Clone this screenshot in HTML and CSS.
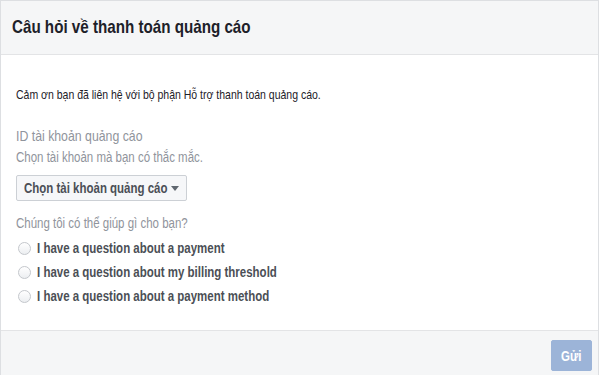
FILE: index.html
```html
<!DOCTYPE html>
<html lang="vi">
<head>
<meta charset="utf-8">
<title>Câu hỏi về thanh toán quảng cáo</title>
<link rel="stylesheet" href="styles.css">
</head>
<body>
<div class="dialog">
  <div class="header"><h1 class="title"><span class="c">Câu hỏi về thanh toán quảng cáo</span></h1></div>
  <div class="content">
    <p class="intro"><span class="c">Cảm ơn bạn đã liên hệ với bộ phận Hỗ trợ thanh toán quảng cáo.</span></p>
    <div class="label"><span class="c">ID tài khoản quảng cáo</span></div>
    <div class="hint"><span class="c">Chọn tài khoản mà bạn có thắc mắc.</span></div>
    <button class="select" type="button"><span class="c sel-text">Chọn tài khoản quảng cáo</span><span class="caret"></span></button>
    <div class="label q"><span class="c">Chúng tôi có thể giúp gì cho bạn?</span></div>
    <ul class="options">
      <li><span class="radio"></span><span class="c">I have a question about a payment</span></li>
      <li><span class="radio"></span><span class="c">I have a question about my billing threshold</span></li>
      <li><span class="radio"></span><span class="c">I have a question about a payment method</span></li>
    </ul>
  </div>
  <div class="footer"><button class="send" type="button"><span class="c">Gửi</span></button></div>
</div>
</body>
</html>
```
FILE: styles.css
```css
* { box-sizing: border-box; }
html, body { margin: 0; padding: 0; background: #fff; }
body { font-family: "Liberation Sans", Arial, sans-serif; color: #1d2129; }

/* condensed text run */
.c {
  display: inline-block; white-space: nowrap;
  transform: scaleX(0.82); transform-origin: 0 50%;
}

.dialog {
  width: 599px; height: 375px;
  border: 1px solid #dddfe2; border-bottom: none;
  display: flex; flex-direction: column;
}
.header {
  height: 54px; flex: none; background: #f5f6f7;
  border-bottom: 1px solid #e3e4e6;
  display: flex; align-items: center; padding: 0 0 1px 11px;
}
.title { margin: 0; font-size: 18.5px; font-weight: bold; color: #1d2129; }

.content { flex: 1; padding: 32px 0 0 15px; }
.intro { margin: 0 0 24px; font-size: 12.8px; line-height: 16px; color: #1d2129; }
.label { font-size: 15px; color: #90949c; line-height: 18px; }
.hint { font-size: 14px; color: #90949c; line-height: 16px; margin-top: 4px; }

.select {
  margin-top: 10px; width: 171px; height: 26px; padding: 0 0 0 7px;
  border: 1px solid #ccd0d5; border-radius: 2px; background: #f6f7f9;
  font-family: inherit; font-size: 14px; font-weight: bold; color: #4b4f56;
  display: flex; align-items: center; gap: 4px;
}
.sel-text { margin-right: -32px; }
.caret {
  width: 0; height: 0; margin-top: 1px;
  border-left: 4px solid transparent; border-right: 4px solid transparent;
  border-top: 5px solid #606770;
}

.q { margin-top: 13px; font-size: 14px; }
.options { list-style: none; margin: 4px 0 0; padding: 0; }
.options li {
  display: flex; align-items: center; gap: 6px; height: 24px; padding-left: 2px;
  font-size: 14px; font-weight: bold; color: #4b4f56;
}
.radio {
  width: 13px; height: 13px; flex: none; border-radius: 50%;
  border: 1px solid #c4c7cc;
  background: linear-gradient(#ffffff, #eceef1);
}

.footer {
  height: 45px; flex: none; background: #f5f6f7; border-top: 1px solid #e3e4e6;
  display: flex; justify-content: flex-end; align-items: flex-start;
  padding: 9px 6px 0 0;
}
.send {
  width: 41px; height: 31px; padding: 0 0 0 9px; border: 1px solid #9cb4d8; border-radius: 2px;
  background: #9cb4d8; color: #fff; font-family: inherit; font-size: 14px; font-weight: bold;
  display: flex; align-items: center;
}
```
